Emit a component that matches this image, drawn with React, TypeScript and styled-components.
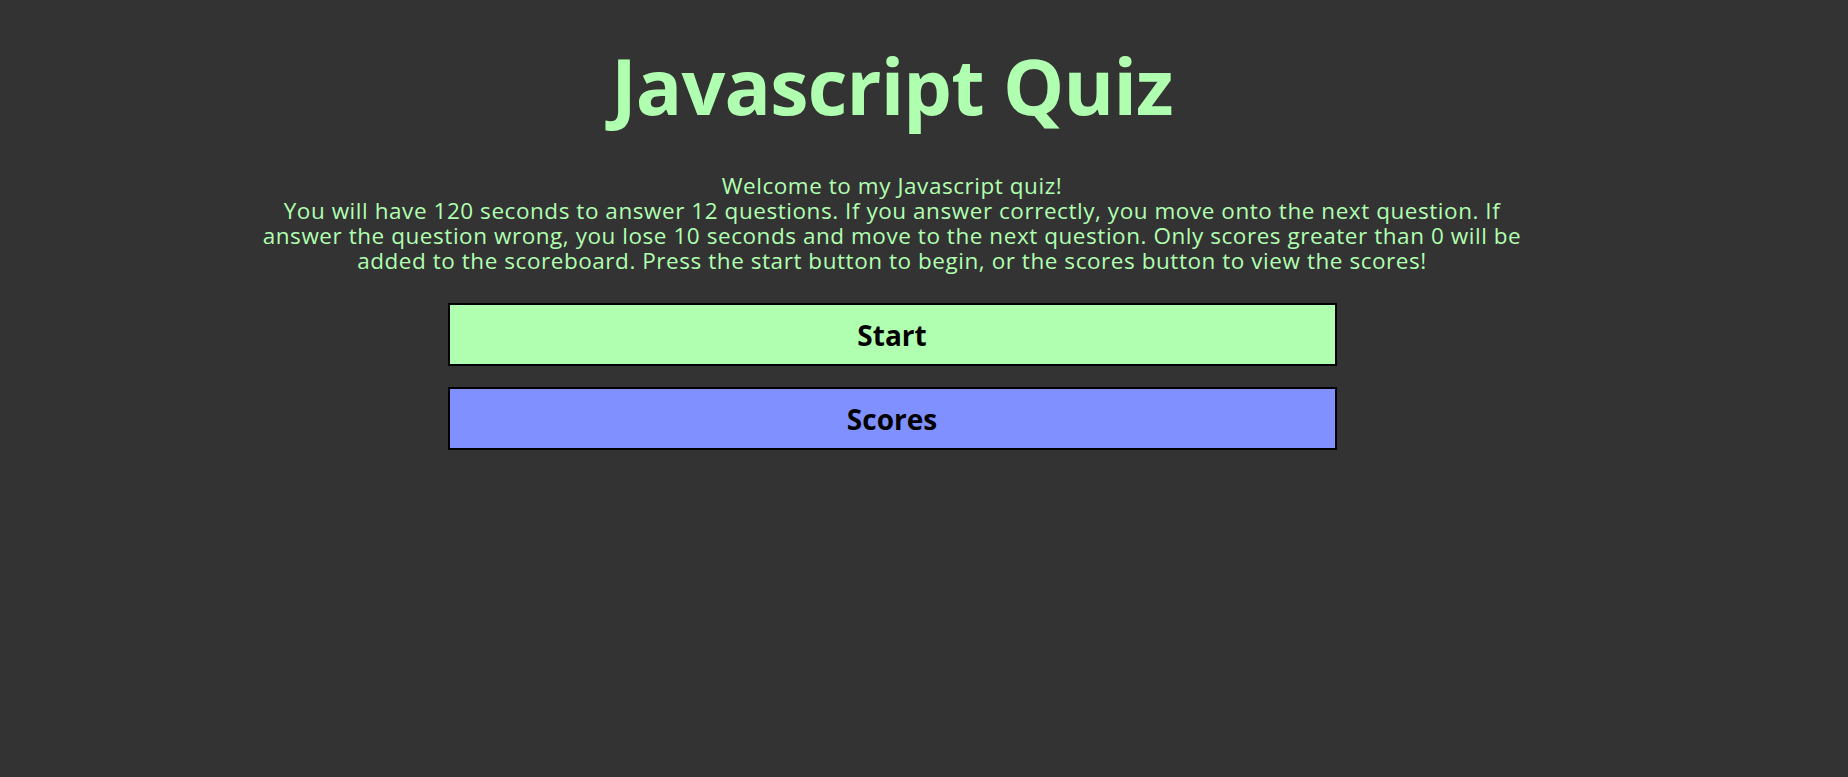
import React from "react";
import styled, { createGlobalStyle } from "styled-components";

const GlobalStyle = createGlobalStyle`
  html, body {
    margin: 0;
    padding: 0;
    background: #333333;
  }
  body {
    font-family: "Open Sans", "Noto Sans", sans-serif;
  }
`;

const Page = styled.main`
  display: flex;
  flex-direction: column;
  align-items: center;
  min-height: 777px;
  padding: 0 64px 0 0;
  box-sizing: border-box;
`;

const Title = styled.h1`
  margin: 36px 0 0;
  font-size: 77px;
  line-height: 100px;
  font-weight: 700;
  color: #b0ffb0;
  letter-spacing: -0.8px;
`;

const Intro = styled.p`
  margin: 37px 0 0;
  font-size: 22.5px;
  line-height: 25px;
  color: #b0ffb0;
  text-align: center;
  letter-spacing: 0.55px;
  white-space: nowrap;
`;

const ButtonStack = styled.div`
  display: flex;
  flex-direction: column;
  gap: 21px;
  margin-top: 30px;
`;

const ActionButton = styled.button<{ $bg: string }>`
  width: 889px;
  height: 63px;
  box-sizing: border-box;
  border: 2px solid #000;
  background: ${(p) => p.$bg};
  color: #000;
  font-family: "Open Sans", "Noto Sans", sans-serif;
  font-size: 28px;
  font-weight: 700;
  cursor: pointer;
`;

export default function App() {
  return (
    <>
      <GlobalStyle />
      <Page>
        <Title>Javascript Quiz</Title>
        <Intro>
          Welcome to my Javascript quiz!
          <br />
          You will have 120 seconds to answer 12 questions. If you answer correctly, you move onto the next question. If
          <br />
          answer the question wrong, you lose 10 seconds and move to the next question. Only scores greater than 0 will be
          <br />
          added to the scoreboard. Press the start button to begin, or the scores button to view the scores!
        </Intro>
        <ButtonStack>
          <ActionButton $bg="#b0ffb0">Start</ActionButton>
          <ActionButton $bg="#8091ff">Scores</ActionButton>
        </ButtonStack>
      </Page>
    </>
  );
}
